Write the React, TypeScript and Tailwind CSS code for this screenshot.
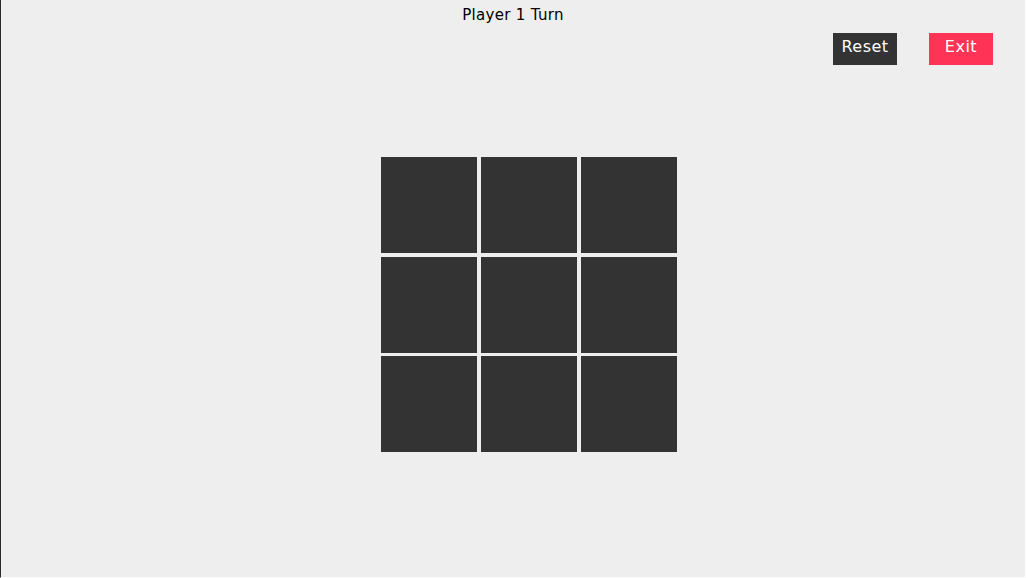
import React from "react";

export default function App() {
  const cells = Array.from({ length: 9 });
  return (
    <div
      className="w-[1026px] h-[578px] bg-[#eeeeee] border-l border-l-[#2a2a2a] border-r border-r-[#fafafa] border-b border-b-[#fafafa] flex flex-col overflow-hidden"
      style={{ fontFamily: '"DejaVu Sans", sans-serif' }}
    >
      <div className="h-[33px] flex justify-center pt-[5px]">
        <span className="text-[15px] leading-[20px] text-black tracking-[0.3px]">Player 1 Turn</span>
      </div>
      <div className="flex justify-end gap-[32px] pr-[32px]">
        <button className="w-[64px] h-[32px] bg-[#333333] text-white text-[16px] leading-[28px] tracking-[0.5px] flex justify-center">
          Reset
        </button>
        <button className="w-[64px] h-[32px] bg-[#ff3355] text-white text-[16px] leading-[28px] tracking-[0.5px] flex justify-center">
          Exit
        </button>
      </div>
      <div className="flex justify-center pt-[92px] pl-[31px]">
        <div className="grid grid-cols-[96px_96px_96px] grid-rows-[96px_96px_96px] gap-x-[4px] gap-y-[3.5px]">
          {cells.map((_, i) => (
            <div key={i} className="bg-[#333333]" />
          ))}
        </div>
      </div>
    </div>
  );
}
